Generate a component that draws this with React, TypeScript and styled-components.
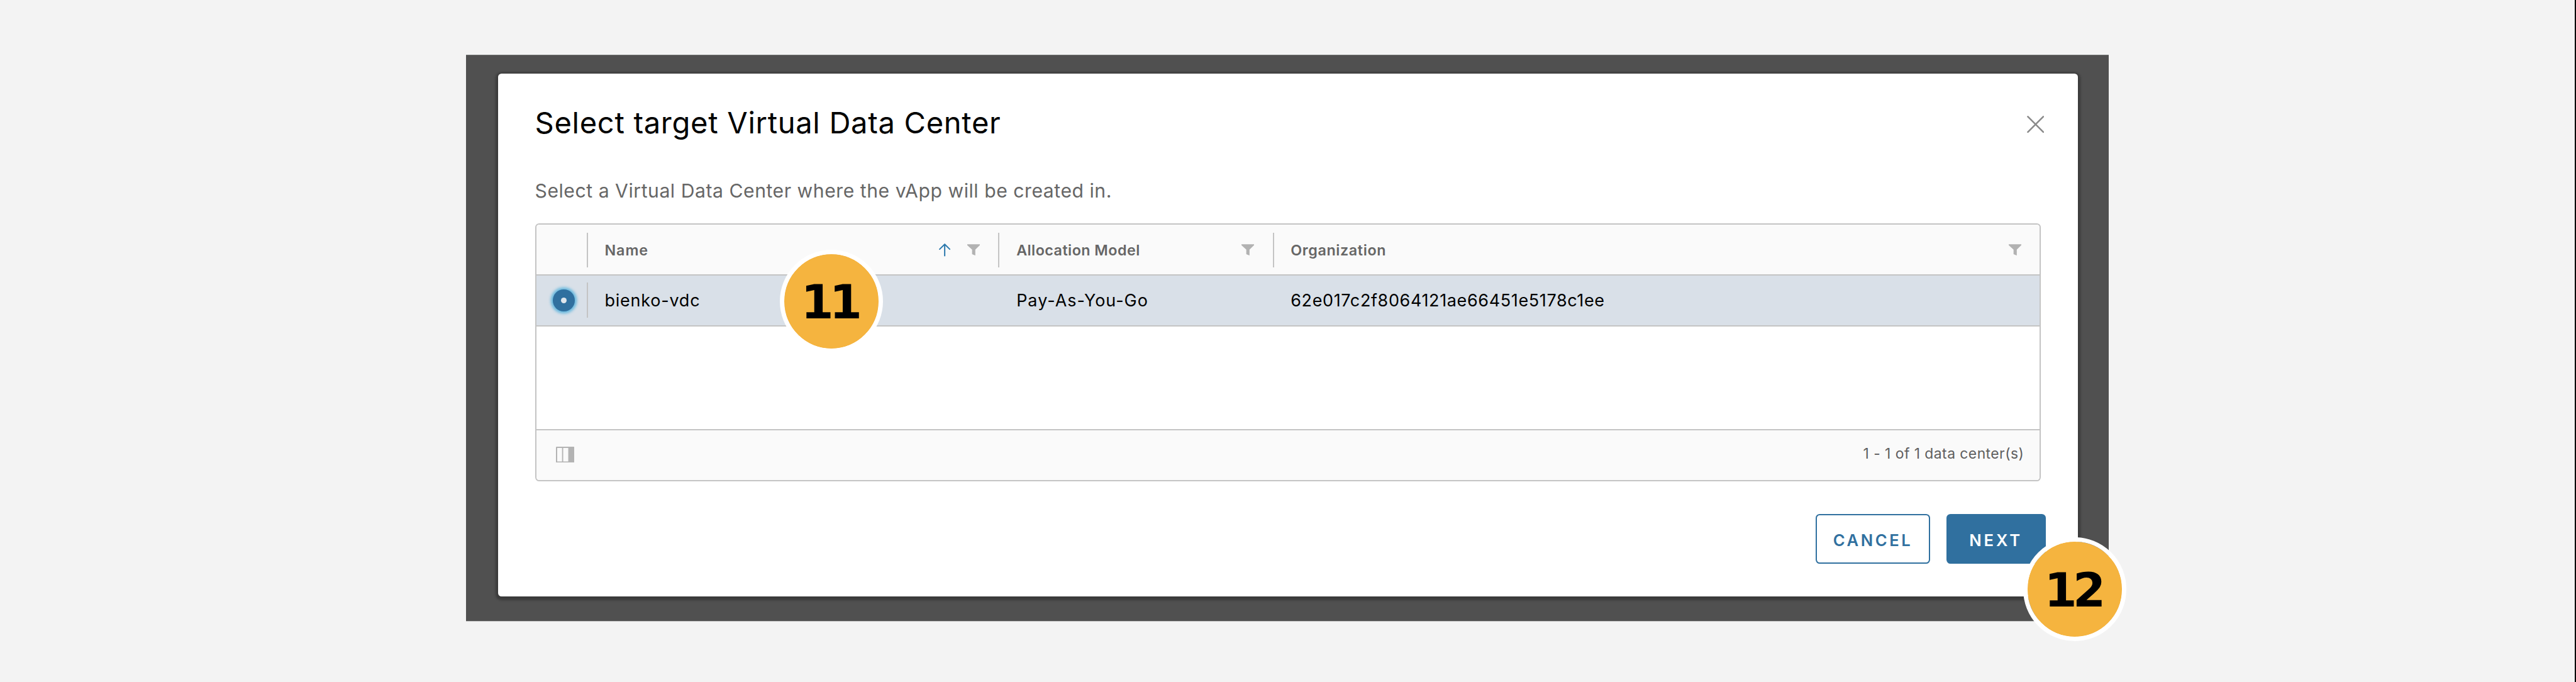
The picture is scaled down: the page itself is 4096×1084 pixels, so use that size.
import React from 'react';
import styled, { createGlobalStyle } from 'styled-components';

// Design units are drawn at this ratio.
const RATIO = 4096 / 4480;
const u = (n: number) => `${(n * RATIO).toFixed(2)}px`;

const sans = `Inter, "Liberation Sans", sans-serif`;
const line = '#c4c4c4';
const blue = '#30709f';

const GlobalStyle = createGlobalStyle`
  *, *::before, *::after { box-sizing: border-box; }
  body { margin: 0; background: #f3f3f3; }
`;

const Page = styled.main`
  position: relative;
  width: 4096px;
  height: 1084px;
  overflow: hidden;
  padding: ${u(95)} 0 0 ${u(811)};
  background: #f3f3f3;
  border-right: 2px solid #000;
  font-family: ${sans};
`;

const Backdrop = styled.div`
  width: ${u(2856)};
  height: ${u(985.5)};
  padding: ${u(32.2)} 0 0 ${u(55)};
  background: #505050;
  border-top: 1px solid #6f7370;
  border-bottom: 1px solid #c4c4c4;
`;

const Dialog = styled.section`
  display: flex;
  flex-direction: column;
  width: ${u(2748.3)};
  height: ${u(909)};
  padding: ${u(55.4)} ${u(56.8)} 0 ${u(64.3)};
  background: #fff;
  border-radius: ${u(6)};
  box-shadow: 0 ${u(2)} ${u(4)} ${u(4)} rgba(0, 0, 0, 0.27);
`;

const DialogHeader = styled.header`
  display: flex;
  align-items: center;
  justify-content: space-between;
  height: ${u(60)};
  padding-right: ${u(2.3)};
`;

const Title = styled.h1`
  margin: 0;
  font-size: ${u(51.5)};
  line-height: ${u(60)};
  font-weight: 400;
  letter-spacing: ${u(0.75)};
  color: #000;
  white-space: nowrap;
`;

const CloseButton = styled.button`
  display: flex;
  padding: ${u(5)} 0 0;
  border: 0;
  background: none;
`;

const Description = styled.p`
  margin: ${u(67.7)} 0 ${u(36.9)};
  font-size: ${u(33)};
  line-height: ${u(40)};
  letter-spacing: ${u(0.58)};
  color: #666;
  white-space: nowrap;
`;

const Datagrid = styled.div`
  display: flex;
  flex-direction: column;
  width: ${u(2619.4)};
  height: ${u(448.6)};
  border: 2px solid ${line};
  border-radius: ${u(7)};
  overflow: hidden;
`;

const GridRow = styled.div<{ $head?: boolean }>`
  display: grid;
  grid-template-columns: ${u(90)} ${u(716)} ${u(477)} 1fr;
  align-items: center;
  height: ${u(88.5)};
  padding-top: ${(p) => (p.$head ? u(2) : '0')};
  flex: none;
  background: ${(p) => (p.$head ? '#fafafa' : '#d9e0e8')};
  border-bottom: 2px solid ${line};
`;

const Cell = styled.div<{ $divided?: boolean; $tracking?: number }>`
  display: flex;
  align-items: center;
  height: ${u(61)};
  padding: 0 ${u(32)} 0 ${u(29.2)};
  border-right: ${(p) => (p.$divided ? `2px solid ${line}` : '0')};
  font-size: ${u(29.5)};
  letter-spacing: ${(p) => u(p.$tracking ?? 0.9)};
  color: #000;
  white-space: nowrap;
`;

const HeadCell = styled(Cell)`
  height: ${u(60)};
  font-size: ${u(25.5)};
  font-weight: 600;
  color: #666;
`;

const SelectCell = styled(Cell)`
  justify-content: center;
  padding: 0 0 0 ${u(8)};
`;

const CellIcons = styled.span`
  display: flex;
  align-items: center;
  gap: ${u(29.4)};
  margin-left: auto;
`;

const Radio = styled.span`
  display: flex;
  align-items: center;
  justify-content: center;
  width: ${u(38)};
  height: ${u(38)};
  border-radius: 50%;
  background: ${blue};
  box-shadow: 0 0 ${u(5)} ${u(3.6)} #69b9de;

  &::after {
    content: '';
    width: ${u(10)};
    height: ${u(10)};
    border-radius: 50%;
    background: #dfe6ec;
  }
`;

const GridBody = styled.div`
  flex: 1;
  background: #fff;
`;

const GridFooter = styled.footer`
  display: flex;
  align-items: center;
  justify-content: space-between;
  flex: none;
  height: ${u(88.5)};
  padding: 0 ${u(27.5)} ${u(3)} ${u(34.2)};
  background: #fafafa;
  border-top: 2px solid ${line};
`;

const Pagination = styled.span`
  padding-bottom: ${u(3)};
  font-size: ${u(25)};
  letter-spacing: ${u(0.5)};
  color: #5f5f5f;
`;

const Actions = styled.div`
  display: flex;
  justify-content: flex-end;
  gap: ${u(28)};
  margin-top: ${u(56.8)};
`;

const Button = styled.button<{ $primary?: boolean; $width: number; $tracking: number }>`
  width: ${(p) => u(p.$width)};
  height: ${u(86)};
  padding: ${u(4)} 0 0;
  border: 2px solid ${blue};
  border-radius: ${u(7)};
  background: ${(p) => (p.$primary ? blue : '#fff')};
  color: ${(p) => (p.$primary ? '#fff' : blue)};
  font-family: ${sans};
  font-size: ${u(28)};
  font-weight: 600;
  letter-spacing: ${(p) => u(p.$tracking)};
`;

const StepBadge = styled.div<{ $cx: number; $cy: number }>`
  position: absolute;
  left: ${(p) => u(p.$cx - 90)};
  top: ${(p) => u(p.$cy - 90)};
  display: flex;
  align-items: center;
  justify-content: center;
  width: ${u(180)};
  height: ${u(180)};
  padding: ${u(4)} ${u(7)} 0 0;
  border: ${u(7.7)} solid #fff;
  border-radius: 50%;
  background: #f5b43f;
  background-clip: padding-box;
  box-shadow: inset 0 0 0 1px #f5b43f;
  color: #000;
  font-family: "DejaVu Sans", sans-serif;
  font-size: ${u(82)};
  line-height: 1;
  font-weight: 700;
  letter-spacing: ${u(-7.5)};
`;

const CloseIcon = () => (
  <svg width={30 * RATIO} height={30 * RATIO} viewBox="0 0 30 30" fill="none" stroke="#8a8a8a" strokeWidth="2.8" strokeLinecap="round">
    <path d="M1.6 1.6 28.4 28.4M28.4 1.6 1.6 28.4" />
  </svg>
);

const SortIcon = () => (
  <svg width={20 * RATIO} height={22.4 * RATIO} viewBox="0 0 20 22.4" fill="none" stroke="#2c79ad" strokeWidth="2.2" strokeLinecap="round" strokeLinejoin="round">
    <path d="M10 21.3V1.4M1.2 10 10 1.3 18.8 10" />
  </svg>
);

const FilterIcon = () => (
  <svg width={22 * RATIO} height={20 * RATIO} viewBox="0 0 22 20" fill="#b2b2b2">
    <path d="M0 .3H22V1.8L14 9.6V19.8L8.4 17.6V9.6L0 1.8Z" />
  </svg>
);

const ColumnsIcon = () => (
  <svg width={32 * RATIO} height={28 * RATIO} viewBox="0 0 32 28" fill="#b3b3b3">
    <path fillRule="evenodd" d="M1.2 0H30.8A1.2 1.2 0 0 1 32 1.2V26.8A1.2 1.2 0 0 1 30.8 28H1.2A1.2 1.2 0 0 1 0 26.8V1.2A1.2 1.2 0 0 1 1.2 0ZM2.2 2.2V25.8H10.6V2.2ZM12.6 2.2V25.8H21.4V2.2Z" />
  </svg>
);

export default function App() {
  return (
    <>
      <GlobalStyle />
      <Page>
        <Backdrop>
          <Dialog>
            <DialogHeader>
              <Title>Select target Virtual Data Center</Title>
              <CloseButton aria-label="Close">
                <CloseIcon />
              </CloseButton>
            </DialogHeader>
            <Description>Select a Virtual Data Center where the vApp will be created in.</Description>
            <Datagrid>
              <GridRow $head>
                <HeadCell $divided />
                <HeadCell $divided $tracking={1}>
                  Name
                  <CellIcons>
                    <SortIcon />
                    <FilterIcon />
                  </CellIcons>
                </HeadCell>
                <HeadCell $divided $tracking={0.5}>
                  Allocation Model
                  <CellIcons>
                    <FilterIcon />
                  </CellIcons>
                </HeadCell>
                <HeadCell $tracking={0.7}>
                  Organization
                  <CellIcons>
                    <FilterIcon />
                  </CellIcons>
                </HeadCell>
              </GridRow>
              <GridRow>
                <SelectCell $divided>
                  <Radio />
                </SelectCell>
                <Cell $tracking={0.85}>bienko-vdc</Cell>
                <Cell $tracking={1.1}>Pay-As-You-Go</Cell>
                <Cell $tracking={0.7}>62e017c2f8064121ae66451e5178c1ee</Cell>
              </GridRow>
              <GridBody />
              <GridFooter>
                <ColumnsIcon />
                <Pagination>1 - 1 of 1 data center(s)</Pagination>
              </GridFooter>
            </Datagrid>
            <Actions>
              <Button $width={199.5} $tracking={3.9}>CANCEL</Button>
              <Button $primary $width={172.5} $tracking={4.3}>NEXT</Button>
            </Actions>
          </Dialog>
        </Backdrop>
        <StepBadge $cx={1446} $cy={524}>11</StepBadge>
        <StepBadge $cx={3608.4} $cy={1024}>12</StepBadge>
      </Page>
    </>
  );
}
